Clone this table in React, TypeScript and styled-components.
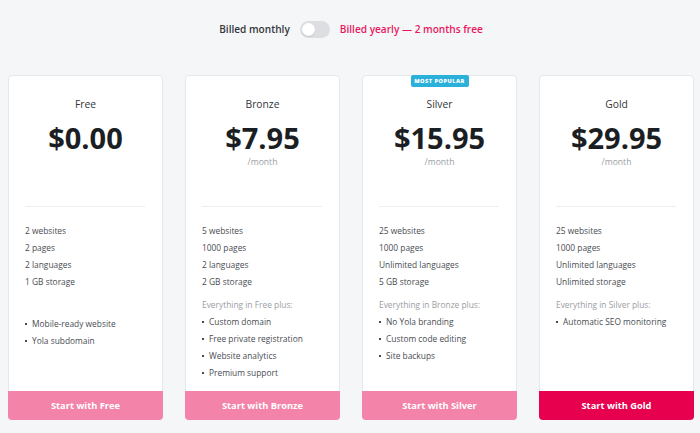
import React from "react";
import styled, { createGlobalStyle } from "styled-components";

const Global = createGlobalStyle`
  html, body { margin: 0; padding: 0; background: #f5f6f8; }
  body { font-family: "Open Sans", "Noto Sans", sans-serif; -webkit-font-smoothing: antialiased; }
  * { box-sizing: border-box; }
`;

const Page = styled.div`
  width: 700px;
  height: 433px;
  background: #f5f6f8;
  padding: 18px 6px 0 8px;
`;

const ToggleRow = styled.div`
  display: flex;
  align-items: center;
  justify-content: center;
  gap: 10px;
  height: 22px;
`;

const ToggleLabel = styled.span<{ $active?: boolean }>`
  font-size: 10.1px;
  font-weight: 600;
  color: ${(p) => (p.$active ? "#e8185f" : "#33363a")};
`;

const Switch = styled.div`
  position: relative;
  width: 30px;
  height: 17px;
  border-radius: 9px;
  background: #dcdee2;
`;

const Knob = styled.div`
  position: absolute;
  left: 2px;
  top: 2px;
  width: 13px;
  height: 13px;
  border-radius: 50%;
  background: #fff;
  box-shadow: 0 1px 1px rgba(0, 0, 0, 0.12);
`;

const Grid = styled.div`
  display: grid;
  grid-template-columns: repeat(4, 1fr);
  gap: 22px;
  margin-top: 35px;
`;

const Card = styled.div`
  position: relative;
  display: flex;
  flex-direction: column;
  height: 345px;
  background: #fff;
  border: 1px solid #e5e7eb;
  border-radius: 4px;
`;

const Badge = styled.div`
  position: absolute;
  top: -1px;
  left: 50%;
  transform: translateX(-50%);
  width: 58px;
  height: 12px;
  display: flex;
  align-items: center;
  justify-content: center;
  background: #2bb0d9;
  color: #fff;
  font-size: 5.6px;
  font-weight: 800;
  letter-spacing: 0.5px;
  border-radius: 2px;
`;

const Header = styled.div`
  height: 130px;
  display: flex;
  flex-direction: column;
  align-items: center;
  padding-top: 21px;
`;

const PlanName = styled.div`
  font-size: 10.3px;
  line-height: 15px;
  font-weight: 500;
  color: #33363a;
`;

const Price = styled.div`
  margin-top: 11px;
  font-size: 29px;
  line-height: 30px;
  font-weight: 700;
  color: #1b1f24;
`;

const Period = styled.div`
  margin-top: 3px;
  font-size: 8.6px;
  line-height: 12px;
  color: #9a9ea4;
`;

const Body = styled.div`
  flex: 1;
  padding: 0 17px 0 16px;
`;

const Divider = styled.div`
  height: 1px;
  background: #eceef1;
`;

const Specs = styled.ul`
  list-style: none;
  margin: 0;
  padding: 15px 0 6px;
`;

const Line = styled.li`
  font-size: 8.4px;
  line-height: 17px;
  color: #484c52;
  white-space: nowrap;
`;

const Extra = styled.div`
  font-size: 8.4px;
  line-height: 17px;
  height: 17px;
  color: #9a9ea4;
  white-space: nowrap;
`;

const Bullets = styled.ul<{ $offset?: boolean }>`
  list-style: none;
  margin: ${(p) => (p.$offset ? "2px" : "0")} 0 0;
  padding: 0;
`;

const Bullet = styled(Line)`
  display: flex;
  align-items: center;
  gap: 5px;
  &::before {
    content: "";
    width: 2px;
    height: 2px;
    background: #484c52;
    flex: none;
  }
`;

const Button = styled.button<{ $strong?: boolean }>`
  height: 29px;
  margin: 0 -1px -1px;
  border: none;
  border-radius: 0 0 4px 4px;
  background: ${(p) => (p.$strong ? "#e6004e" : "#f383a8")};
  color: #fff;
  font-family: inherit;
  font-size: 9.3px;
  font-weight: 700;
`;

type Plan = {
  name: string;
  price: string;
  monthly: boolean;
  specs: string[];
  extra: string;
  bullets: string[];
  popular?: boolean;
  strong?: boolean;
};

const plans: Plan[] = [
  {
    name: "Free",
    price: "$0.00",
    monthly: false,
    specs: ["2 websites", "2 pages", "2 languages", "1 GB storage"],
    extra: "",
    bullets: ["Mobile-ready website", "Yola subdomain"],
  },
  {
    name: "Bronze",
    price: "$7.95",
    monthly: true,
    specs: ["5 websites", "1000 pages", "2 languages", "2 GB storage"],
    extra: "Everything in Free plus:",
    bullets: ["Custom domain", "Free private registration", "Website analytics", "Premium support"],
  },
  {
    name: "Silver",
    price: "$15.95",
    monthly: true,
    specs: ["25 websites", "1000 pages", "Unlimited languages", "5 GB storage"],
    extra: "Everything in Bronze plus:",
    bullets: ["No Yola branding", "Custom code editing", "Site backups"],
    popular: true,
  },
  {
    name: "Gold",
    price: "$29.95",
    monthly: true,
    specs: ["25 websites", "1000 pages", "Unlimited languages", "Unlimited storage"],
    extra: "Everything in Silver plus:",
    bullets: ["Automatic SEO monitoring"],
    strong: true,
  },
];

export default function App() {
  return (
    <Page>
      <Global />
      <ToggleRow>
        <ToggleLabel>Billed monthly</ToggleLabel>
        <Switch>
          <Knob />
        </Switch>
        <ToggleLabel $active>Billed yearly — 2 months free</ToggleLabel>
      </ToggleRow>
      <Grid>
        {plans.map((p) => (
          <Card key={p.name}>
            {p.popular && <Badge>MOST POPULAR</Badge>}
            <Header>
              <PlanName>{p.name}</PlanName>
              <Price>{p.price}</Price>
              {p.monthly && <Period>/month</Period>}
            </Header>
            <Body>
              <Divider />
              <Specs>
                {p.specs.map((s) => (
                  <Line key={s}>{s}</Line>
                ))}
              </Specs>
              <Extra>{p.extra}</Extra>
              <Bullets $offset={!p.extra}>
                {p.bullets.map((b) => (
                  <Bullet key={b}>{b}</Bullet>
                ))}
              </Bullets>
            </Body>
            <Button $strong={p.strong}>Start with {p.name}</Button>
          </Card>
        ))}
      </Grid>
    </Page>
  );
}
